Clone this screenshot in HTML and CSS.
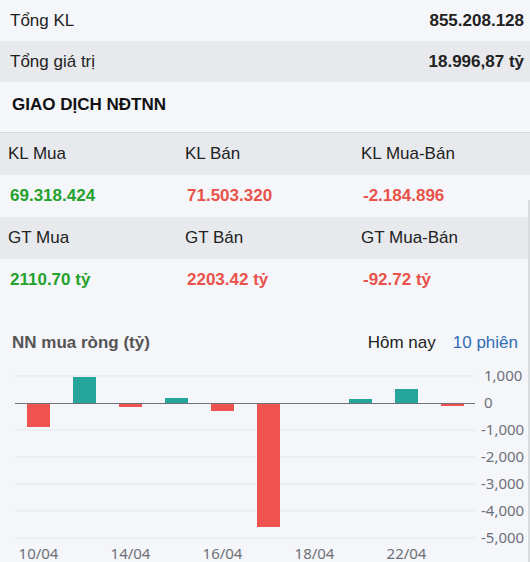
FILE: index.html
```html
<!DOCTYPE html>
<html lang="vi">
<head>
    <meta charset="UTF-8">
    <meta name="viewport" content="width=device-width, initial-scale=1.0">
    <title>Giao dịch NĐTNN</title>
    <link rel="stylesheet" href="styles.css">
</head>
<body>
    <div class="panel">
        <!-- Summary -->
        <div class="sum-row">
            <span>Tổng KL</span>
            <b>855.208.128</b>
        </div>
        <div class="sum-row alt">
            <span>Tổng giá trị</span>
            <b>18.996,87 tỷ</b>
        </div>

        <h2 class="section-title">GIAO DỊCH NĐTNN</h2>

        <!-- Foreign trading table -->
        <div class="foreign">
            <div class="f-row head">
                <span>KL Mua</span>
                <span>KL Bán</span>
                <span>KL Mua-Bán</span>
            </div>
            <div class="f-row vals">
                <span class="up">69.318.424</span>
                <span class="down">71.503.320</span>
                <span class="down">-2.184.896</span>
            </div>
            <div class="f-row head">
                <span>GT Mua</span>
                <span>GT Bán</span>
                <span>GT Mua-Bán</span>
            </div>
            <div class="f-row vals">
                <span class="up">2110.70 tỷ</span>
                <span class="down">2203.42 tỷ</span>
                <span class="down">-92.72 tỷ</span>
            </div>
        </div>

        <!-- Chart -->
        <div class="chart-head">
            <span class="chart-title">NN mua ròng (tỷ)</span>
            <div class="tabs">
                <span>Hôm nay</span>
                <span class="active">10 phiên</span>
            </div>
        </div>

        <svg class="chart" width="530" height="200" viewBox="0 0 530 200">
            <g class="grid">
                <line x1="15" y1="14" x2="475" y2="14"/>
                <line x1="15" y1="68" x2="475" y2="68"/>
                <line x1="15" y1="95" x2="475" y2="95"/>
                <line x1="15" y1="122" x2="475" y2="122"/>
                <line x1="15" y1="149" x2="475" y2="149"/>
                <line x1="15" y1="176" x2="475" y2="176"/>
            </g>
            <g class="bars">
                <rect class="neg" x="27" y="41" width="23" height="24"/>
                <rect class="pos" x="73" y="15" width="23" height="26"/>
                <rect class="neg" x="119" y="41" width="23" height="4"/>
                <rect class="pos" x="165" y="36" width="23" height="5"/>
                <rect class="neg" x="211" y="41" width="23" height="8"/>
                <rect class="neg" x="257" y="41" width="23" height="124"/>
                <rect class="pos" x="349" y="37" width="23" height="4"/>
                <rect class="pos" x="395" y="27" width="23" height="14"/>
                <rect class="neg" x="441" y="41" width="23" height="3"/>
            </g>
            <line class="axis" x1="15" y1="41.5" x2="475" y2="41.5"/>
            <g class="ylab">
                <text x="484" y="19">1,000</text>
                <text x="484" y="46">0</text>
                <text x="481" y="73">-1,000</text>
                <text x="481" y="100">-2,000</text>
                <text x="481" y="127">-3,000</text>
                <text x="481" y="154">-4,000</text>
                <text x="481" y="181">-5,000</text>
            </g>
            <g class="xlab">
                <text x="38.5" y="197">10/04</text>
                <text x="130.5" y="197">14/04</text>
                <text x="222.5" y="197">16/04</text>
                <text x="314.5" y="197">18/04</text>
                <text x="406.5" y="197">22/04</text>
            </g>
        </svg>
    </div>
</body>
</html>
```

FILE: styles.css
```css
body {
    margin: 0;
    font-family: "Liberation Sans", Arial, sans-serif;
    font-size: 17px;
    color: #222;
    background-color: #f5f6f9;
}
.panel {
    position: relative;
    width: 530px;
    height: 562px;
    overflow: hidden;
}
.panel::after {
    content: "";
    position: absolute;
    top: 200px;
    right: 0;
    bottom: 0;
    width: 2px;
    background: #d8dadd;
}
.sum-row {
    display: flex;
    justify-content: space-between;
    align-items: center;
    height: 41px;
    padding: 0 6px 0 10px;
}
.sum-row.alt {
    background-color: #e7e9ed;
}
.sum-row b {
    font-weight: bold;
}
.section-title {
    margin: 0;
    height: 50px;
    line-height: 46px;
    padding-left: 12px;
    font-size: 17px;
    font-weight: bold;
    color: #111;
    border-bottom: 1px solid #d6d8dc;
}
.f-row {
    display: grid;
    grid-template-columns: 177px 176px 1fr;
    align-items: center;
    height: 42px;
    padding-left: 8px;
}
.f-row.head {
    background-color: #e7e9ed;
}
.f-row.vals {
    padding-left: 10px;
    font-weight: bold;
}
.up {
    color: #25a12d;
}
.down {
    color: #e8524a;
}
.chart-head {
    display: flex;
    justify-content: space-between;
    align-items: center;
    height: 24px;
    padding: 30px 12px 7px 12px;
}
.chart-title {
    font-weight: bold;
    color: #555;
}
.tabs {
    display: flex;
    gap: 17px;
}
.tabs .active {
    color: #2f6db5;
}
.chart {
    display: block;
    overflow: visible;
}
.grid line {
    stroke: #e4e7ed;
    stroke-width: 1;
}
.axis {
    stroke: #6e7079;
    stroke-width: 1;
}
.pos {
    fill: #26a69a;
}
.neg {
    fill: #ef5350;
}
.ylab text, .xlab text {
    font-family: "Noto Sans", sans-serif;
    font-size: 15px;
    fill: #6e7079;
}
.xlab text {
    text-anchor: middle;
}
```
